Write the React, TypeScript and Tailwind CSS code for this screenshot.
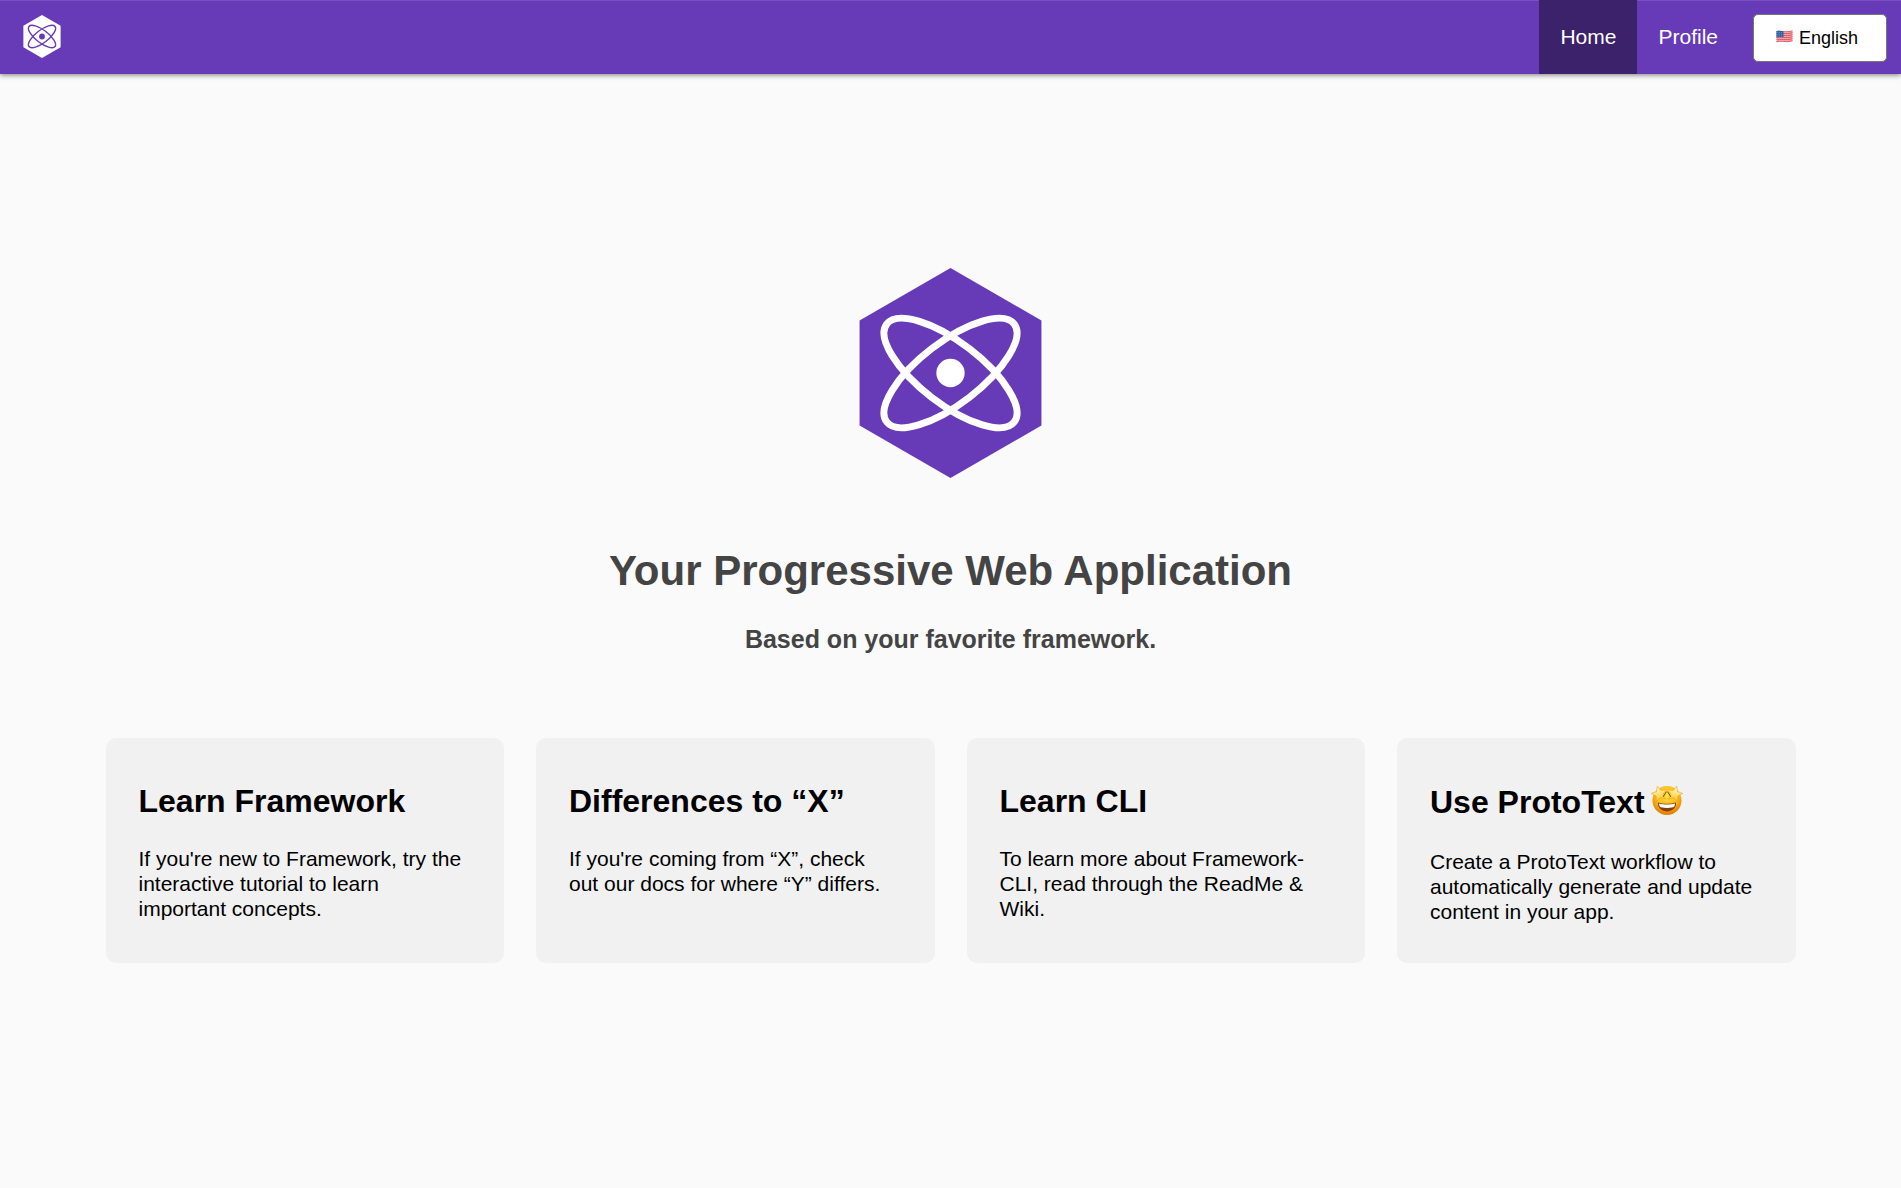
import React from 'react';

function PreactMark({ className, hex, line, label }: { className: string; hex: string; line: string; label: string }) {
  return (
    <svg className={className} viewBox="-222 -256 444 512" role="img" aria-label={label}>
      <path d="M0-256 221.7-128V128L0 256-221.7 128V-128Z" fill={hex} />
      <g fill="none" stroke={line} strokeWidth="17">
        <ellipse rx="75" ry="196" transform="rotate(52.5)" />
        <ellipse rx="75" ry="196" transform="rotate(-52.5)" />
      </g>
      <circle r="34.5" fill={line} />
    </svg>
  );
}

function Flag() {
  return (
    <svg className="pointer-events-none absolute left-[23px] top-[16px] h-[13px] w-[17px]" viewBox="0 0 17 13" aria-hidden="true">
      <defs>
        <clipPath id="flag-wave">
          <path d="M.5 1.2C3 .2 5.5 1 8.5 1.2 11.5 1.4 14 .8 16.5.2V11.3C14 12.2 11.5 12.3 8.5 12 5.5 11.7 3 11.7.5 12.6Z" />
        </clipPath>
      </defs>
      <g clipPath="url(#flag-wave)">
        <rect width="17" height="13" fill="#f0a9ac" />
        <g fill="none" stroke="#dc5560" strokeWidth="1">
          <path d="M0 1.6C5 .6 9 2.8 17 .6M0 3.6C5 2.6 9 4.8 17 2.6M0 5.6C5 4.6 9 6.8 17 4.6M0 7.6C5 6.6 9 8.8 17 6.6M0 9.6C5 8.6 9 10.8 17 8.6M0 11.6C5 10.6 9 12.8 17 10.6" />
        </g>
        <path d="M0 0H7.5V7.2C5 6.8 3 6.9 0 7.6Z" fill="#2a62a8" />
        <path d="M1.5 2.5H7M1.5 4.3H7M1.5 6H7" stroke="#9cc0e4" strokeWidth=".6" strokeDasharray=".8 1" />
      </g>
    </svg>
  );
}

function StarStruck() {
  return (
    <svg className="ml-1.5 inline-block h-8 w-8 align-[-3px]" viewBox="0 0 32 32" role="img" aria-label="star-struck">
      <defs>
        <radialGradient id="face" cx=".5" cy=".32" r=".7">
          <stop offset="0" stopColor="#ffe545" />
          <stop offset=".55" stopColor="#fcb91c" />
          <stop offset="1" stopColor="#dc7600" />
        </radialGradient>
        <linearGradient id="star" x1="0" y1="0" x2="0" y2="1">
          <stop offset="0" stopColor="#fffbd0" />
          <stop offset="1" stopColor="#ffcb2c" />
        </linearGradient>
        <path id="star-eye" d="M0-8 2.2-3 7.6-2.5 3.5 1.2 4.7 6.5 0 3.7-4.7 6.5-3.5 1.2-7.6-2.5-2.2-3Z" />
      </defs>
      <circle cx="16" cy="16.5" r="14.5" fill="url(#face)" />
      <path d="M7 18.5C12 20.3 20 20.3 25 18.5 25.5 24 21 27.5 16 27.5S6.5 24 7 18.5Z" fill="#8a3d08" />
      <path d="M8 19.4C12.5 20.9 19.5 20.9 24 19.4 24 21.6 23.2 23 22 23.3 18 24.1 14 24.1 10 23.3 8.8 23 8 21.6 8 19.4Z" fill="#fff" />
      <g fill="url(#star)" stroke="#e79a12" strokeWidth=".5" strokeLinejoin="round">
        <use href="#star-eye" transform="translate(8.3 10) rotate(-14)" />
        <use href="#star-eye" transform="translate(23.7 10) rotate(14)" />
      </g>
      <path d="M12.4 12.5 15.2 8M19.6 12.5 16.8 8" stroke="#7a3f06" strokeWidth="1" strokeLinecap="round" />
    </svg>
  );
}

const cards = [
  { title: 'Learn Framework', text: "If you're new to Framework, try the interactive tutorial to learn important concepts." },
  { title: 'Differences to “X”', text: "If you're coming from “X”, check out our docs for where “Y” differs." },
  { title: 'Learn CLI', text: 'To learn more about Framework-CLI, read through the ReadMe & Wiki.' },
  { title: 'Use ProtoText', text: 'Create a ProtoText workflow to automatically generate and update content in your app.', star: true },
];

export default function App() {
  return (
    <div className="min-h-screen bg-[#fafafa] font-['Helvetica_Neue','Liberation_Sans',Arial,sans-serif] text-black">
      <header className="flex h-[74px] items-stretch bg-[#673ab8] shadow-[inset_0_1px_0_#7a50c0,0_1px_5px_rgba(0,0,0,0.5)]">
        <a href="#home" className="flex items-center pb-px pl-[23px]">
          <PreactMark className="h-[43px] w-[38px]" hex="#fff" line="#673ab8" label="Logo" />
        </a>
        <nav className="ml-auto flex text-[21px] leading-[25px] text-white">
          <a href="#home" aria-current="page" className="flex items-center bg-[#3c216b] px-[21px] pb-px">Home</a>
          <a href="#profile" className="flex items-center px-[21px] pb-px">Profile</a>
        </nav>
        <div className="relative mx-[14px] mt-[14px] self-start">
          <select
            aria-label="Language"
            className="block h-12 w-[134px] appearance-none rounded-[5px] border border-[#767676] bg-white pl-[45px] text-[18px] text-black"
          >
            <option>English</option>
          </select>
          <Flag />
        </div>
      </header>

      <main className="mx-auto max-w-[1690px] pb-16 pt-[194px]">
        <PreactMark className="mx-auto block h-[210px] w-[183px]" hex="#673ab8" line="#fff" label="Framework logo" />
        <h1 className="mt-[68px] text-center text-[42px] font-bold leading-[50px] text-[#444]">Your Progressive Web Application</h1>
        <p className="mt-7 text-center text-[25px] font-bold leading-[30px] text-[#444]">Based on your favorite framework.</p>
        <section className="mt-[84px] grid grid-cols-4 gap-8">
          {cards.map((card) => (
            <a key={card.title} href="#learn" className="block rounded-[10px] bg-[#f1f1f1] pb-[39px] pl-[33px] pr-9 pt-11">
              <h2 className={card.star ? 'text-[32px] font-bold leading-[41px]' : 'text-[32px] font-bold leading-[38px]'}>
                {card.title}
                {card.star && <StarStruck />}
              </h2>
              <p className="mt-[26px] text-[21px] leading-[25px]">{card.text}</p>
            </a>
          ))}
        </section>
      </main>
    </div>
  );
}
